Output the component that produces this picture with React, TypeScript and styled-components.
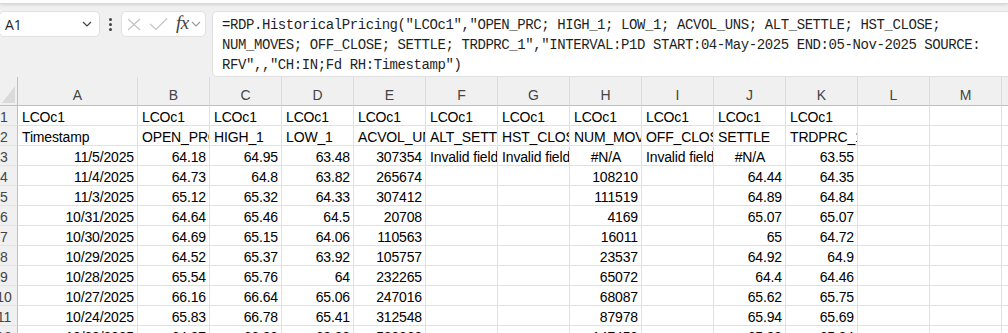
import React from 'react';
import styled, { createGlobalStyle } from 'styled-components';

const GlobalStyle = createGlobalStyle`
  html, body {
    margin: 0;
    padding: 0;
    background: #f0f0f0;
    overflow: hidden;
  }
  * {
    box-sizing: border-box;
  }
`;

const COLUMNS = ['A', 'B', 'C', 'D', 'E', 'F', 'G', 'H', 'I', 'J', 'K', 'L', 'M', 'N'];

type Align = 'left' | 'right' | 'center';

interface CellData {
  text: string;
  align: Align;
}

const FORMULA = [
  '=RDP.HistoricalPricing("LCOc1","OPEN_PRC; HIGH_1; LOW_1; ACVOL_UNS; ALT_SETTLE; HST_CLOSE;',
  'NUM_MOVES; OFF_CLOSE; SETTLE; TRDPRC_1","INTERVAL:P1D START:04-May-2025 END:05-Nov-2025 SOURCE:',
  'RFV",,"CH:IN;Fd RH:Timestamp")',
];

const HEADERS = [
  'Timestamp',
  'OPEN_PRC',
  'HIGH_1',
  'LOW_1',
  'ACVOL_UNS',
  'ALT_SETTLE',
  'HST_CLOSE',
  'NUM_MOVES',
  'OFF_CLOSE',
  'SETTLE',
  'TRDPRC_1',
];

const DATA: string[][] = [
  ['11/5/2025', '64.18', '64.95', '63.48', '307354', 'Invalid field', 'Invalid field', '#N/A', 'Invalid field', '#N/A', '63.55'],
  ['11/4/2025', '64.73', '64.8', '63.82', '265674', '', '', '108210', '', '64.44', '64.35'],
  ['11/3/2025', '65.12', '65.32', '64.33', '307412', '', '', '111519', '', '64.89', '64.84'],
  ['10/31/2025', '64.64', '65.46', '64.5', '20708', '', '', '4169', '', '65.07', '65.07'],
  ['10/30/2025', '64.69', '65.15', '64.06', '110563', '', '', '16011', '', '65', '64.72'],
  ['10/29/2025', '64.52', '65.37', '63.92', '105757', '', '', '23537', '', '64.92', '64.9'],
  ['10/28/2025', '65.54', '65.76', '64', '232265', '', '', '65072', '', '64.4', '64.46'],
  ['10/27/2025', '66.16', '66.64', '65.06', '247016', '', '', '68087', '', '65.62', '65.75'],
  ['10/24/2025', '65.83', '66.78', '65.41', '312548', '', '', '87978', '', '65.94', '65.69'],
  ['10/23/2025', '64.97', '66.09', '63.38', '529366', '', '', '147459', '', '65.99', '65.94'],
];

const alignOf = (text: string): Align => {
  if (text === '#N/A') return 'center';
  if (/^[\d./]+$/.test(text)) return 'right';
  return 'left';
};

const Page = styled.div`
  width: 100%;
  height: 333px;
  overflow: hidden;
  background: #f0f0f0;
`;

const RibbonEdge = styled.div`
  height: 4px;
  background: #fdfdfd;
  border-bottom: 1px solid #d9d9d9;
  box-shadow: 0 1px 3px rgba(0, 0, 0, 0.12);
`;

const FormulaBar = styled.div`
  display: flex;
  align-items: flex-start;
  padding-top: 7px;
  margin-left: -1px;
  height: 73px;
`;

const Box = styled.div`
  background: #fff;
  border: 1px solid #e0e0e0;
  border-radius: 5px;
`;

const NameBox = styled(Box)`
  width: 101px;
  height: 26px;
  display: flex;
  align-items: center;
  justify-content: space-between;
  padding: 0 7px 0 5px;
  font-family: 'Open Sans', 'Liberation Sans', sans-serif;
  font-size: 14px;
  color: #242424;
`;

const Dots = styled.div`
  width: 21px;
  height: 26px;
  display: flex;
  flex-direction: column;
  align-items: center;
  justify-content: center;
  gap: 2px;
  span {
    width: 3px;
    height: 3px;
    border-radius: 50%;
    background: #424242;
  }
`;

const ActionBox = styled(Box)`
  width: 85px;
  height: 26px;
  display: flex;
  align-items: center;
  padding-left: 5px;
`;

const FxText = styled.span`
  font-family: 'Liberation Serif', 'DejaVu Serif', serif;
  font-style: italic;
  font-size: 19px;
  color: #424242;
  margin: -3px 2px 0 7px;
  letter-spacing: -0.5px;
`;

const FormulaBox = styled(Box)`
  flex: 1;
  height: 66px;
  margin-left: 6px;
  margin-right: -20px;
  padding: 3px 0 0 9px;
  font-family: 'Liberation Mono', 'DejaVu Sans Mono', monospace;
  font-size: 14px;
  letter-spacing: -0.42px;
  line-height: 20px;
  color: #1f1f1f;
  white-space: pre;
  overflow: hidden;
`;

const Sheet = styled.div`
  display: grid;
  grid-template-columns: 28px 120px repeat(13, 72px);
  margin-left: -10px;
  font-family: 'Liberation Sans', Arial, sans-serif;
  font-size: 14px;
  overflow: hidden;
`;

const Corner = styled.div`
  height: 29px;
  border-right: 1px solid #bfbfbf;
  border-bottom: 1px solid #bfbfbf;
  display: flex;
  align-items: flex-end;
  justify-content: flex-end;
  padding: 0 2px 2px 0;
`;

const ColHead = styled.div`
  height: 29px;
  border-right: 1px solid #dcdcdc;
  border-bottom: 1px solid #bfbfbf;
  display: flex;
  align-items: flex-end;
  justify-content: center;
  padding-bottom: 2px;
  color: #444;
  background: #f0f0f0;
`;

const RowHead = styled.div`
  height: 20px;
  border-right: 1px solid #bfbfbf;
  border-bottom: 1px solid #e3e3e3;
  text-align: center;
  padding-top: 2px;
  line-height: 18px;
  color: #444;
  background: #f0f0f0;
  padding-left: 1px;
`;

const Cell = styled.div<{ $align: Align }>`
  height: 20px;
  border-right: 1px solid #e1e1e1;
  border-bottom: 1px solid #e1e1e1;
  background: #fff;
  padding: 2px 3px 0 4px;
  line-height: 18px;
  letter-spacing: -0.15px;
  color: #000;
  white-space: nowrap;
  overflow: hidden;
  text-align: ${(props) => props.$align};
`;

const Chevron = ({ size = 10 }: { size?: number }) => (
  <svg width={size} height={size * 0.6} viewBox="0 0 10 6">
    <polyline points="1,1 5,5 9,1" fill="none" stroke="#424242" strokeWidth="1.2" />
  </svg>
);

const buildRows = (): CellData[][] => {
  const rows: CellData[][] = [];
  rows.push(HEADERS.map(() => ({ text: 'LCOc1', align: 'left' as Align })));
  rows.push(HEADERS.map((h) => ({ text: h, align: 'left' as Align })));
  DATA.forEach((r) => rows.push(r.map((t) => ({ text: t, align: alignOf(t) }))));
  return rows;
};

const App = () => {
  const rows = buildRows();
  const extra = COLUMNS.length - HEADERS.length;

  return (
    <Page>
      <GlobalStyle />
      <RibbonEdge />
      <FormulaBar>
        <NameBox>
          <span>A1</span>
          <Chevron />
        </NameBox>
        <Dots>
          <span />
          <span />
          <span />
        </Dots>
        <ActionBox>
          <svg width="14" height="13" viewBox="0 0 14 13">
            <path d="M1 1 L13 12 M13 1 L1 12" stroke="#c2c2c2" strokeWidth="1.1" fill="none" />
          </svg>
          <svg width="20" height="14" viewBox="0 0 20 14" style={{ marginLeft: 8 }}>
            <polyline points="1,7 7,12.5 18,1.5" stroke="#c2c2c2" strokeWidth="1.1" fill="none" />
          </svg>
          <FxText>fx</FxText>
          <svg width="10" height="6" viewBox="0 0 10 6">
            <polyline points="1,1 5,5 9,1" fill="none" stroke="#9a9a9a" strokeWidth="1.1" />
          </svg>
        </ActionBox>
        <FormulaBox>{FORMULA.join('\n')}</FormulaBox>
      </FormulaBar>
      <Sheet>
        <Corner>
          <svg width="13" height="17" viewBox="0 0 13 17">
            <polygon points="13,0 13,17 0,17" fill="#dadada" />
          </svg>
        </Corner>
        {COLUMNS.map((c) => (
          <ColHead key={c}>{c}</ColHead>
        ))}
        {rows.map((row, i) => (
          <React.Fragment key={i}>
            <RowHead>{i + 1}</RowHead>
            {row.map((cell, j) => (
              <Cell key={j} $align={cell.align}>
                {cell.text}
              </Cell>
            ))}
            {Array.from({ length: extra }).map((_, k) => (
              <Cell key={`e${k}`} $align="left" />
            ))}
          </React.Fragment>
        ))}
      </Sheet>
    </Page>
  );
};

export default App;
